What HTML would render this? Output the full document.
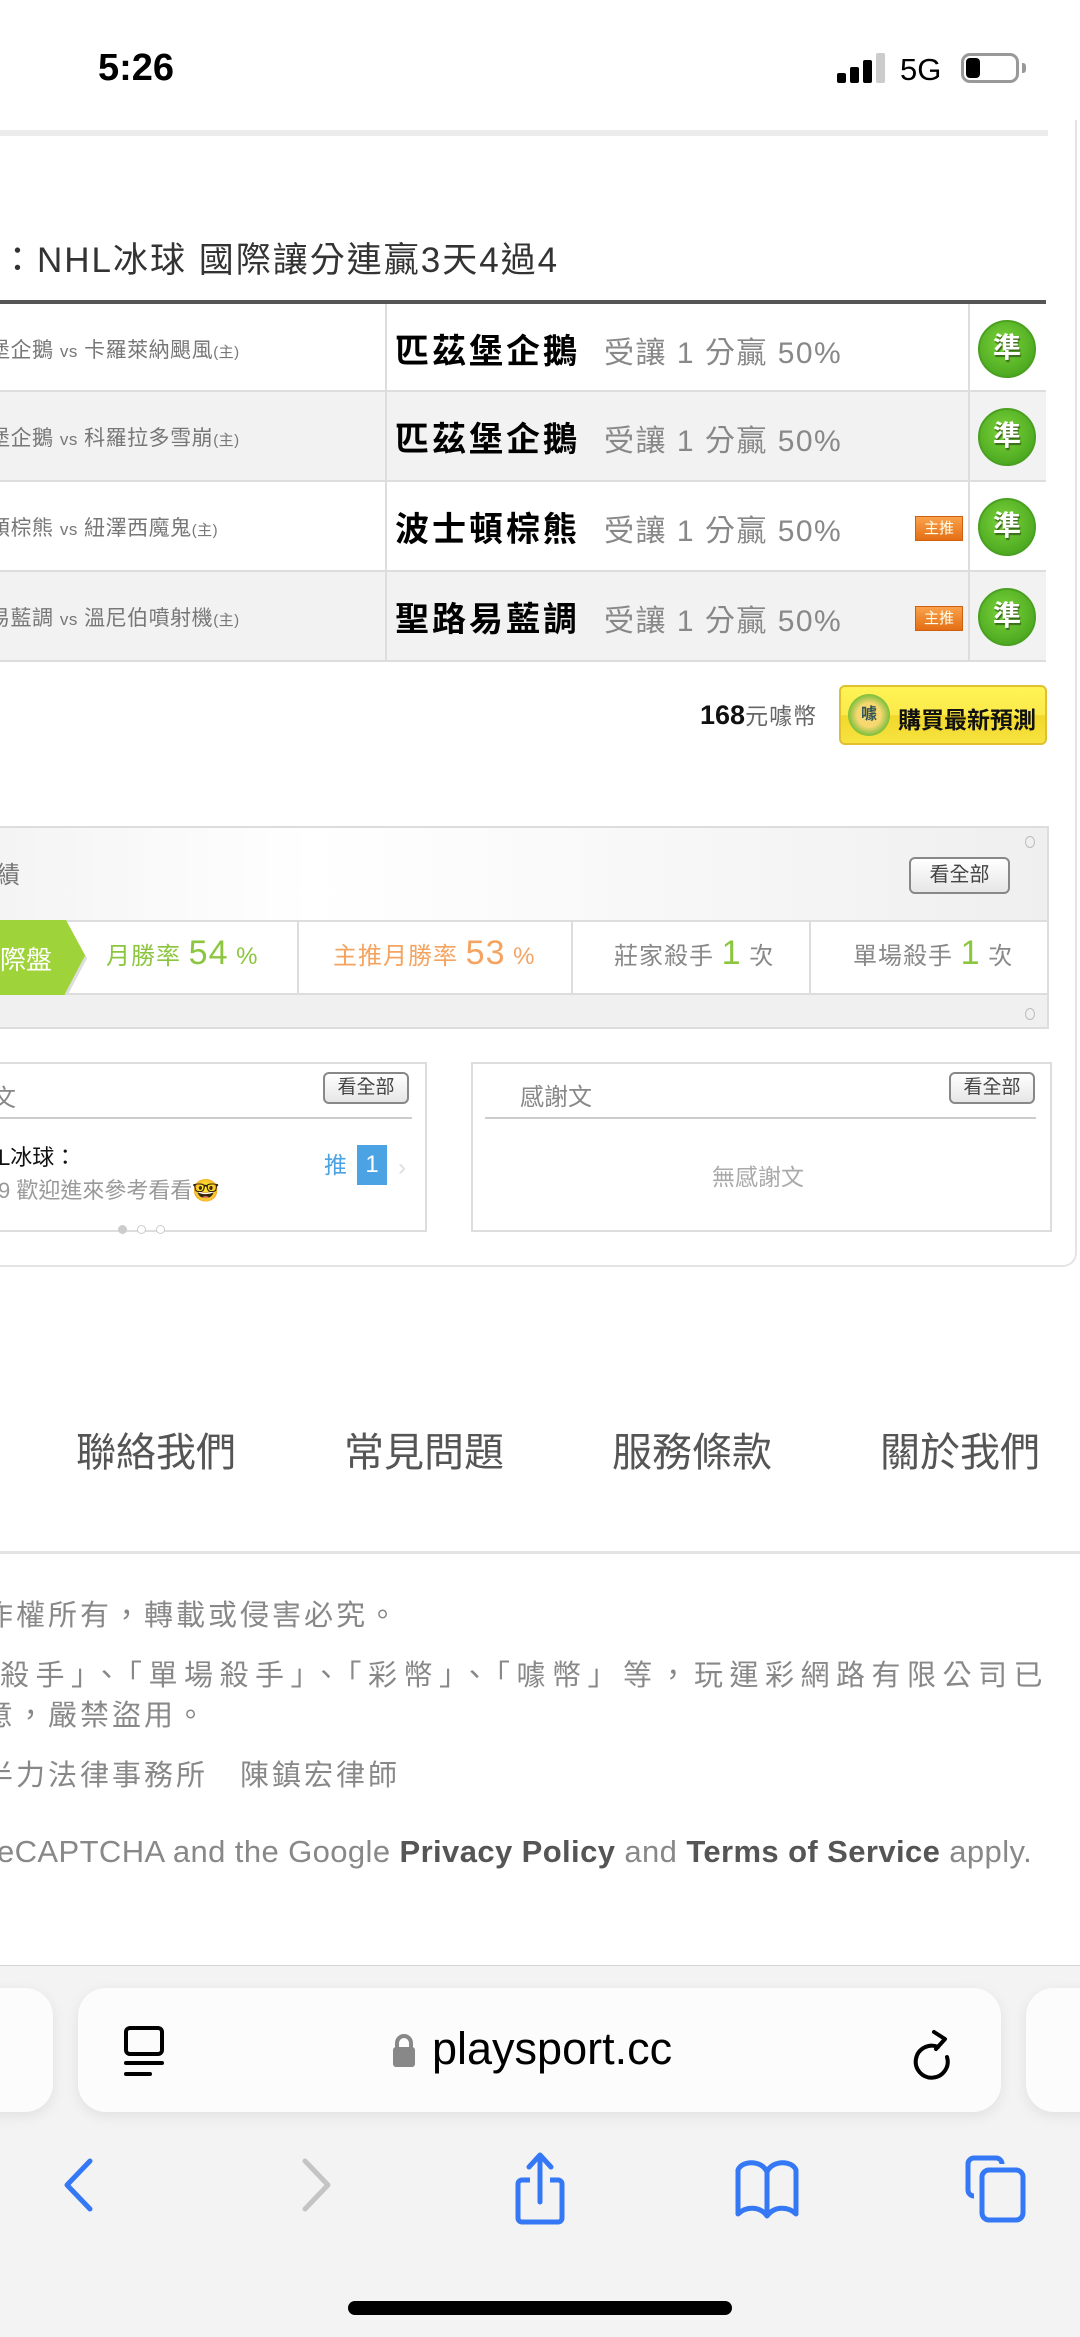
<!DOCTYPE html>
<html><head><meta charset="utf-8">
<style>
*{margin:0;padding:0;box-sizing:border-box}
body{width:1080px;height:2337px;position:relative;overflow:hidden;background:#fff;font-family:"Liberation Sans","Noto Sans CJK TC",sans-serif;color:#333}
.a{position:absolute;white-space:nowrap}
.btn{position:absolute;border:2px solid #888;border-radius:6px;background:linear-gradient(#fff,#e6e6e6);font-size:20px;color:#444;text-align:center}
.row{position:absolute;left:0;width:1046px;height:90px;border-bottom:2px solid #ddd}
.row .l{position:absolute;left:-11px;top:30px;font-size:21px;color:#777;letter-spacing:0.5px}
.row .l small{font-size:15px}
.row .t{position:absolute;left:395px;top:20px;font-size:34px;font-weight:bold;color:#000;letter-spacing:3px}
.row .r{position:absolute;left:604px;top:24px;font-size:30px;color:#888;letter-spacing:1.5px}
.row .z{position:absolute;left:978px;top:16px;width:58px;height:58px;border-radius:50%;background:radial-gradient(circle at 45% 40%,#7cd43c,#3c9a16);border:2px solid #4aa020;color:#fff;font-size:28px;font-weight:bold;text-align:center;line-height:52px;text-shadow:1px 2px 1px #3a6a1a}
.row .b{position:absolute;left:915px;top:34px;width:48px;height:25px;background:linear-gradient(#f9a24b,#e46e14);border:1px solid #d06010;color:#ffe;font-size:15px;text-align:center;line-height:23px}
.ft{font-size:29px;color:#888;letter-spacing:3px}
</style></head><body>
<!-- status bar -->
<div class="a" style="left:98px;top:47px;font-size:38px;font-weight:bold;color:#000">5:26</div>
<div class="a" style="left:837px;top:73px;width:9px;height:10px;background:#000;border-radius:2px"></div>
<div class="a" style="left:850px;top:67px;width:9px;height:16px;background:#000;border-radius:2px"></div>
<div class="a" style="left:863px;top:60px;width:9px;height:23px;background:#000;border-radius:2px"></div>
<div class="a" style="left:876px;top:53px;width:9px;height:30px;background:#ccc;border-radius:2px"></div>
<div class="a" style="left:900px;top:52px;font-size:31px;color:#000">5G</div>
<div class="a" style="left:961px;top:53px;width:58px;height:30px;border:3px solid #999;border-radius:9px"></div>
<div class="a" style="left:966px;top:58px;width:14px;height:20px;background:#000;border-radius:4px"></div>
<div class="a" style="left:1022px;top:63px;width:4px;height:10px;background:#999;border-radius:0 3px 3px 0"></div>

<!-- container frame -->
<div class="a" style="left:0;top:130px;width:1048px;height:6px;background:#ececec"></div>
<div class="a" style="left:-20px;top:120px;width:1097px;height:1147px;border-right:2px solid #e4e4e4;border-bottom:2px solid #e4e4e4;border-radius:0 0 14px 0"></div>

<div class="a" style="left:0;top:232px;font-size:35px;color:#333;letter-spacing:2px">：NHL冰球 國際讓分連贏3天4過4</div>

<!-- table -->
<div class="a" style="left:0;top:300px;width:1046px;height:4px;background:#555"></div>
<div class="a" style="left:0;top:304px;width:1046px;height:358px;border-right:2px solid #ddd"></div>
<div class="row" style="top:304px;height:88px;background:#fff"><div class="l">堡企鵝 <span style="font-size:17px">vs</span> 卡羅萊納颶風<small>(主)</small></div><div class="t">匹茲堡企鵝</div><div class="r">受讓 1 分贏 50%</div><div class="z">準</div></div>
<div class="row" style="top:392px;background:#f2f2f2"><div class="l">堡企鵝 <span style="font-size:17px">vs</span> 科羅拉多雪崩<small>(主)</small></div><div class="t">匹茲堡企鵝</div><div class="r">受讓 1 分贏 50%</div><div class="z">準</div></div>
<div class="row" style="top:482px;background:#fff"><div class="l">頓棕熊 <span style="font-size:17px">vs</span> 紐澤西魔鬼<small>(主)</small></div><div class="t">波士頓棕熊</div><div class="r">受讓 1 分贏 50%</div><div class="b">主推</div><div class="z">準</div></div>
<div class="row" style="top:572px;background:#f2f2f2"><div class="l">易藍調 <span style="font-size:17px">vs</span> 溫尼伯噴射機<small>(主)</small></div><div class="t">聖路易藍調</div><div class="r">受讓 1 分贏 50%</div><div class="b">主推</div><div class="z">準</div></div>
<div class="a" style="left:385px;top:304px;width:2px;height:358px;background:#ddd"></div>
<div class="a" style="left:968px;top:304px;width:2px;height:358px;background:#ddd"></div>

<!-- buy -->
<div class="a" style="left:700px;top:697px;font-size:27px;font-weight:bold;color:#111">168<span style="font-size:23px;font-weight:normal;color:#666;letter-spacing:1px">元噱幣</span></div>
<div class="a" style="left:839px;top:685px;width:208px;height:60px;border:2px solid #e0c030;border-radius:6px;background:linear-gradient(#fff455 0%,#fbe94a 50%,#f1d82a 51%,#f7e240 100%)"></div>
<div class="a" style="left:848px;top:694px;width:42px;height:42px;border-radius:50%;background:radial-gradient(#f7d770 40%,#7bbf3c 70%,#f4ef6a 100%);font-size:16px;color:#355;text-align:center;line-height:42px;font-weight:bold">噱</div>
<div class="a" style="left:898px;top:701px;font-size:23px;font-weight:bold;color:#111">購買最新預測</div>

<!-- stats panel -->
<div class="a" style="left:-4px;top:826px;width:1053px;height:203px;background:#f0f0f0;border:2px solid #ddd"></div>
<div class="a" style="left:-2px;top:828px;width:1049px;height:92px;background:linear-gradient(90deg,#f4f4f4,#fff 30%,#f6f6f6 70%,#efefef)"></div>
<div class="a" style="left:-4px;top:855px;font-size:24px;color:#777">績</div>
<div class="btn" style="left:909px;top:857px;width:101px;height:37px;line-height:33px">看全部</div>
<div class="a" style="left:1025px;top:836px;width:10px;height:12px;border:1px solid #bbb;border-radius:50%"></div>
<div class="a" style="left:1025px;top:1008px;width:10px;height:12px;border:1px solid #bbb;border-radius:50%"></div>
<div class="a" style="left:-2px;top:920px;width:1049px;height:75px;background:#fff;border-top:2px solid #ddd;border-bottom:2px solid #ddd"></div>
<svg class="a" style="left:0;top:920px" width="90" height="75"><polygon points="0,0 66,0 86,37 66,75 0,75" fill="#9fd33a"/><polyline points="66,75 86,37" stroke="#ddd" stroke-width="3" fill="none"/></svg>
<div class="a" style="left:0;top:940px;font-size:26px;color:#fff">際盤</div>
<div class="a" style="left:106px;top:934px;font-size:24px;color:#8cc63f;letter-spacing:1px">月勝率 <span style="font-size:34px">54</span> %</div>
<div class="a" style="left:297px;top:921px;width:2px;height:72px;background:#ddd"></div>
<div class="a" style="left:333px;top:934px;font-size:24px;color:#f4a460;letter-spacing:1px">主推月勝率 <span style="font-size:34px">53</span> %</div>
<div class="a" style="left:571px;top:921px;width:2px;height:72px;background:#ddd"></div>
<div class="a" style="left:614px;top:934px;font-size:24px;color:#888;letter-spacing:1px">莊家殺手 <span style="font-size:34px;color:#8cc63f">1</span> 次</div>
<div class="a" style="left:809px;top:921px;width:2px;height:72px;background:#ddd"></div>
<div class="a" style="left:853px;top:934px;font-size:24px;color:#888;letter-spacing:1px">單場殺手 <span style="font-size:34px;color:#8cc63f">1</span> 次</div>

<!-- left card -->
<div class="a" style="left:-4px;top:1062px;width:431px;height:170px;border:2px solid #ddd"></div>
<div class="a" style="left:-8px;top:1078px;font-size:24px;color:#888">文</div>
<div class="btn" style="left:323px;top:1072px;width:86px;height:32px;line-height:28px;font-size:19px">看全部</div>
<div class="a" style="left:0;top:1117px;width:412px;height:2px;background:#ccc"></div>
<div class="a" style="left:-2px;top:1140px;font-size:22px;color:#111">L冰球：</div>
<div class="a" style="left:-2px;top:1173px;font-size:22px;color:#999">9 歡迎進來參考看看<span style="font-size:22px">🤓</span></div>
<div class="a" style="left:324px;top:1146px;font-size:23px;color:#4ba3e3">推</div>
<div class="a" style="left:357px;top:1145px;width:30px;height:40px;background:#4ba3e3;color:#fff;font-size:24px;text-align:center;line-height:40px">1</div>
<div class="a" style="left:398px;top:1154px;font-size:24px;color:#ddd">›</div>
<div class="a" style="left:118px;top:1225px;width:9px;height:9px;border-radius:50%;background:#ccc"></div>
<div class="a" style="left:137px;top:1225px;width:9px;height:9px;border-radius:50%;border:1px solid #ccc;background:#fff"></div>
<div class="a" style="left:156px;top:1225px;width:9px;height:9px;border-radius:50%;border:1px solid #ccc;background:#fff"></div>

<!-- right card -->
<div class="a" style="left:471px;top:1062px;width:581px;height:170px;border:2px solid #ddd"></div>
<div class="a" style="left:520px;top:1077px;font-size:24px;color:#888">感謝文</div>
<div class="btn" style="left:949px;top:1072px;width:86px;height:32px;line-height:28px;font-size:19px">看全部</div>
<div class="a" style="left:485px;top:1117px;width:551px;height:2px;background:#ccc"></div>
<div class="a" style="left:712px;top:1158px;font-size:23px;color:#aaa">無感謝文</div>

<!-- footer -->
<div class="a" style="left:76px;top:1420px;font-size:40px;color:#555">聯絡我們</div>
<div class="a" style="left:344px;top:1420px;font-size:40px;color:#555">常見問題</div>
<div class="a" style="left:612px;top:1420px;font-size:40px;color:#555">服務條款</div>
<div class="a" style="left:880px;top:1420px;font-size:40px;color:#555">關於我們</div>
<div class="a" style="left:0;top:1551px;width:1080px;height:3px;background:#e4e4e4"></div>
<div class="a ft" style="left:-16px;top:1592px">作權所有，轉載或侵害必究。</div>
<div class="a ft" style="left:0;top:1652px;letter-spacing:6.5px">殺手」、「單場殺手」、「彩幣」、「噱幣」等，玩運彩網路有限公司已</div>
<div class="a ft" style="left:-16px;top:1692px">意，嚴禁盜用。</div>
<div class="a ft" style="left:-16px;top:1752px">半力法律事務所　陳鎮宏律師</div>
<div class="a" style="left:-3px;top:1834px;font-size:31px;color:#888;letter-spacing:0.4px">eCAPTCHA and the Google <b style="color:#555">Privacy Policy</b> and <b style="color:#555">Terms of Service</b> apply.</div>

<!-- safari -->
<div class="a" style="left:0;top:1965px;width:1080px;height:372px;background:#f3f3f3;border-top:1px solid #d4d4d4"></div>
<div class="a" style="left:-40px;top:1988px;width:93px;height:124px;background:#fcfcfc;border-radius:28px;box-shadow:0 4px 14px rgba(0,0,0,.08)"></div>
<div class="a" style="left:1026px;top:1988px;width:100px;height:124px;background:#fcfcfc;border-radius:28px;box-shadow:0 4px 14px rgba(0,0,0,.08)"></div>
<div class="a" style="left:78px;top:1988px;width:923px;height:124px;background:#fcfcfc;border-radius:28px;box-shadow:0 4px 14px rgba(0,0,0,.08)"></div>
<svg class="a" style="left:120px;top:2022px" width="50" height="60"><rect x="6" y="6" width="36" height="26" rx="4" fill="none" stroke="#000" stroke-width="4"/><line x1="6" y1="41" x2="42" y2="41" stroke="#000" stroke-width="4" stroke-linecap="round"/><line x1="6" y1="52" x2="30" y2="52" stroke="#000" stroke-width="4" stroke-linecap="round"/></svg>
<svg class="a" style="left:390px;top:2032px" width="28" height="40"><path d="M7 16 V11 a7 7 0 0 1 14 0 V16" fill="none" stroke="#888" stroke-width="4"/><rect x="3" y="15" width="22" height="20" rx="3" fill="#888"/></svg>
<div class="a" style="left:432px;top:2023px;font-size:45px;color:#000">playsport.cc</div>
<svg class="a" style="left:912px;top:2022px" width="52" height="60"><path d="M31 17 A16 16 0 1 0 40 27" fill="none" stroke="#000" stroke-width="4" stroke-linecap="round" transform="translate(-5,8)"/><path d="M22 10 L33 17 L24 27" fill="none" stroke="#000" stroke-width="4" stroke-linecap="round" stroke-linejoin="round"/></svg>
<svg class="a" style="left:55px;top:2155px" width="50" height="60"><path d="M35 6 L12 30 L35 54" fill="none" stroke="#3478f6" stroke-width="5" stroke-linecap="round" stroke-linejoin="round"/></svg>
<svg class="a" style="left:290px;top:2155px" width="50" height="60"><path d="M15 6 L38 30 L15 54" fill="none" stroke="#c4c4c4" stroke-width="5" stroke-linecap="round" stroke-linejoin="round"/></svg>
<svg class="a" style="left:508px;top:2150px" width="64" height="76"><path d="M22 30 H14 a4 4 0 0 0 -4 4 V68 a4 4 0 0 0 4 4 H50 a4 4 0 0 0 4 -4 V34 a4 4 0 0 0 -4 -4 H42" fill="none" stroke="#3478f6" stroke-width="5"/><path d="M32 52 V6 M21 17 L32 5 L43 17" fill="none" stroke="#3478f6" stroke-width="5" stroke-linecap="round" stroke-linejoin="round"/></svg>
<svg class="a" style="left:732px;top:2158px" width="70" height="62"><path d="M35 14 C30 2 10 2 6 12 V56 C14 48 28 48 35 58 C42 48 56 48 64 56 V12 C60 2 40 2 35 14 Z M35 14 V56" fill="none" stroke="#3478f6" stroke-width="5" stroke-linejoin="round"/></svg>
<svg class="a" style="left:962px;top:2150px" width="70" height="76"><path d="M12 46 a6 6 0 0 1 -6 -6 V14 a6 6 0 0 1 6 -6 H34 a6 6 0 0 1 6 6" fill="none" stroke="#3478f6" stroke-width="5"/><rect x="20" y="20" width="41" height="50" rx="7" fill="none" stroke="#3478f6" stroke-width="5"/></svg>
<div class="a" style="left:348px;top:2301px;width:384px;height:14px;background:#000;border-radius:7px"></div>
</body></html>
